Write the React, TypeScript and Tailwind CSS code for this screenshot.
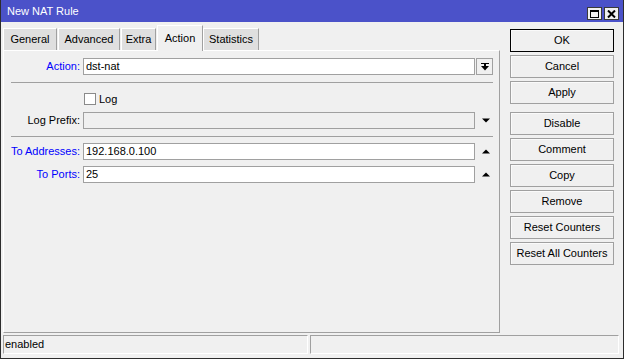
import React from 'react';

const tabs = [
  { label: 'General', cls: 'w-[54px] h-[22px] ml-0' },
  { label: 'Advanced', cls: 'w-[62px] h-[22px] ml-[1px]' },
  { label: 'Extra', cls: 'w-[35px] h-[22px] ml-[1px]' },
  { label: 'Action', cls: 'w-[46px] h-[26px] ml-[1px] -mb-px relative z-10 bg-[#f0f0f0]', active: true },
  { label: 'Statistics', cls: 'w-[56px] h-[22px] ml-0' },
];

const buttons = [
  { label: 'OK', cls: 'mt-0 border-black' },
  { label: 'Cancel', cls: 'mt-[3px] border-[#a0a0a0]' },
  { label: 'Apply', cls: 'mt-[3px] border-[#a0a0a0]' },
  { label: 'Disable', cls: 'mt-[8px] border-[#a0a0a0]' },
  { label: 'Comment', cls: 'mt-[3px] border-[#a0a0a0]' },
  { label: 'Copy', cls: 'mt-[3px] border-[#a0a0a0]' },
  { label: 'Remove', cls: 'mt-[3px] border-[#a0a0a0]' },
  { label: 'Reset Counters', cls: 'mt-[3px] border-[#a0a0a0]' },
  { label: 'Reset All Counters', cls: 'mt-[3px] border-[#a0a0a0]' },
];

function TriUp() {
  return (
    <svg width="8" height="5" viewBox="0 0 8 5">
      <polygon points="0,4.5 8,4.5 4,0.5" fill="#000" />
    </svg>
  );
}

function TriDown() {
  return (
    <svg width="8" height="5" viewBox="0 0 8 5">
      <polygon points="0,0.5 8,0.5 4,4.5" fill="#000" />
    </svg>
  );
}

export default function App() {
  return (
    <div className="w-[624px] h-[359px] bg-[#f0f0f0] border-x border-b border-[#2d2d2d] flex flex-col font-['Liberation_Sans',Arial,sans-serif] text-[11px] text-black overflow-hidden">
      {/* Title bar */}
      <div className="h-[22px] shrink-0 bg-[#4b52c9] flex items-center justify-between pl-[6px] pr-[4px]">
        <span className="text-white text-[11px] leading-none">New NAT Rule</span>
        <div className="flex gap-[2px] self-start mt-[7px]">
          <div className="w-[15px] h-[13px] bg-[#f0f0f0] border border-[#3a3a3a] flex items-center justify-center">
            <div className="w-[9px] h-[8px] border border-black border-t-2" />
          </div>
          <div className="w-[15px] h-[13px] bg-[#f0f0f0] border border-[#3a3a3a] flex items-center justify-center">
            <svg width="9" height="8" viewBox="0 0 9 8">
              <path d="M1 0.5 L8 7.5 M8 0.5 L1 7.5" stroke="#000" strokeWidth="2" />
            </svg>
          </div>
        </div>
      </div>

      {/* Main area */}
      <div className="h-[311px] shrink-0 flex">
        <div className="w-[499px] pl-[2px] pt-[3px] flex flex-col">
          <div className="h-[25px] flex items-end">
            {tabs.map((t) => (
              <div
                key={t.label}
                className={`${t.cls} ${t.active ? '' : 'bg-[#dfdfdf]'} border-t border-l border-white border-r border-r-[#a0a0a0] flex items-center justify-center`}
              >
                {t.label}
              </div>
            ))}
          </div>

          <div className="flex-1 border-t border-l border-white border-r border-b border-r-[#a0a0a0] border-b-[#a0a0a0] flex flex-col">
            {/* Action */}
            <div className="mt-[7px] h-[17px] flex items-center">
              <div className="w-[76px] text-right text-[#0000ff]">Action:</div>
              <div className="ml-[3px] w-[392px] h-[17px] bg-white border border-[#a0a0a0] pl-[2px] flex items-center">dst-nat</div>
              <div className="ml-[1px] w-[17px] h-[17px] border border-[#a0a0a0] flex items-center justify-center">
                <svg width="8" height="8" viewBox="0 0 8 8">
                  <rect x="0" y="0" width="8" height="1" fill="#000" />
                  <rect x="3" y="1" width="2" height="3" fill="#000" />
                  <polygon points="0,3 8,3 4,7.5" fill="#000" />
                </svg>
              </div>
            </div>

            <div className="mt-[7px] ml-[7px] w-[482px] h-px bg-[#a0a0a0]" />

            {/* Log */}
            <div className="mt-[10px] h-[12px] flex items-center">
              <div className="ml-[80px] w-[12px] h-[12px] bg-white border border-[#8a8a8a]" />
              <span className="ml-[3px]">Log</span>
            </div>

            {/* Log Prefix */}
            <div className="mt-[7px] h-[17px] flex items-center">
              <div className="w-[76px] text-right">Log Prefix:</div>
              <div className="ml-[3px] w-[392px] h-[17px] bg-[#f0f0f0] border border-[#a0a0a0]" />
              <div className="ml-[1px] w-[17px] h-[17px] flex items-center justify-center pl-[2px]">
                <TriDown />
              </div>
            </div>

            <div className="mt-[7px] ml-[7px] w-[482px] h-px bg-[#a0a0a0]" />

            {/* To Addresses */}
            <div className="mt-[6px] h-[17px] flex items-center">
              <div className="w-[76px] text-right text-[#0000ff]">To Addresses:</div>
              <div className="ml-[3px] w-[392px] h-[17px] bg-white border border-[#a0a0a0] pl-[2px] flex items-center">192.168.0.100</div>
              <div className="ml-[1px] w-[17px] h-[17px] flex items-center justify-center pl-[2px]">
                <TriUp />
              </div>
            </div>

            {/* To Ports */}
            <div className="mt-[6px] h-[17px] flex items-center">
              <div className="w-[76px] text-right text-[#0000ff]">To Ports:</div>
              <div className="ml-[3px] w-[392px] h-[17px] bg-white border border-[#a0a0a0] pl-[2px] flex items-center">25</div>
              <div className="ml-[1px] w-[17px] h-[17px] flex items-center justify-center pl-[2px]">
                <TriUp />
              </div>
            </div>
          </div>
        </div>

        {/* Buttons */}
        <div className="ml-[10px] pt-[7px] w-[104px] flex flex-col">
          {buttons.map((b) => (
            <div
              key={b.label}
              className={`${b.cls} h-[23px] border bg-[#f0f0f0] shadow-[inset_1px_1px_0_#fafafa] flex items-center justify-center`}
            >
              {b.label}
            </div>
          ))}
        </div>
      </div>

      {/* Status bar */}
      <div className="mt-[2px] h-[19px] shrink-0 flex pl-[2px] gap-[2px]">
        <div className="w-[305px] border border-[#a0a0a0] border-b-white border-r-white pl-[1px] flex items-center">enabled</div>
        <div className="w-[309px] border border-[#a0a0a0] border-b-white border-r-white" />
      </div>
    </div>
  );
}
